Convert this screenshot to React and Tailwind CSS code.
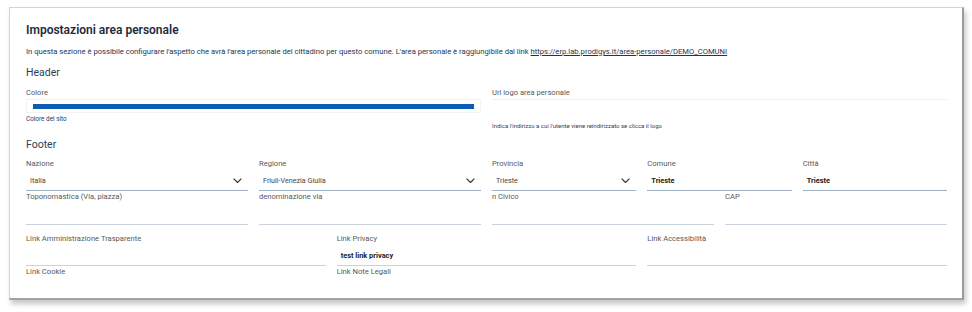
import React from 'react';

const Chevron = () => (
  <svg width="9" height="6" viewBox="0 0 9 6" fill="none">
    <path d="M1 1l3.5 3.5L8 1" stroke="#3a3a3a" strokeWidth="1.1" strokeLinecap="round" strokeLinejoin="round" />
  </svg>
);

const Label = ({ children }) => (
  <div className="h-[12px] text-[7.6px] leading-[12px] text-[#585858] whitespace-nowrap">{children}</div>
);

const SelectField = ({ label, value, span }) => (
  <div className={span}>
    <Label>{label}</Label>
    <div className="h-[21px] border-b border-[#9eb0c4] flex items-center justify-between pt-[2px] pl-[4px] pr-[6px] text-[7.2px] text-[#474747]">
      <span>{value}</span>
      <Chevron />
    </div>
  </div>
);

const InputField = ({ label, value, span, h = 'h-[21px]', line = 'border-[#c9d2dc]' }) => (
  <div className={span}>
    <Label>{label}</Label>
    <div className={`${h} border-b ${line} flex items-center pt-[2px] pl-[4px] text-[7.4px] font-bold text-[#222]`}>
      {value}
    </div>
  </div>
);

export default function App() {
  return (
    <div className="w-[972px] h-[312px] bg-white pt-[7px] pl-[9px] font-[Roboto,sans-serif]">
      <div className="w-[955px] h-[293px] overflow-hidden bg-white border border-[#d4d4d4] border-r-2 border-r-[#9c9c9c] border-b-2 border-b-[#a3a3a3] shadow-[2px_4px_5px_rgba(0,0,0,0.22)] pt-[14px] pl-[16px] pr-[15px]">
        <h1 className="text-[12px] leading-[16px] font-semibold text-[#1c2b3b]">Impostazioni area personale</h1>
        <p className="mt-[8px] text-[7.65px] leading-[12px] text-[#1f3650] whitespace-nowrap">
          In questa sezione è possibile configurare l'aspetto che avrà l'area personale del cittadino per questo comune. L'area personale è raggiungibile dal link{' '}
          <span className="underline">https://erp.lab.prodigys.it/area-personale/DEMO_COMUNI</span>
        </p>

        {/* Header */}
        <h2 className="mt-[8px] text-[10.5px] leading-[14px] text-[#2a3f57]">Header</h2>
        <div className="mt-[7px] grid grid-cols-2 gap-[11px]">
          <div>
            <Label>Colore</Label>
            <div className="h-[14px] border border-[#f1f3f5] px-[6px] pt-[4px]">
              <div className="h-[5px] bg-[#0a5db3]" />
            </div>
            <div className="mt-[1px] text-[6.4px] leading-[10px] text-[#2a4260]">Colore del sito</div>
          </div>
          <div>
            <Label>Url logo area personale</Label>
            <div className="h-[22px] border-t border-[#eceff2]" />
            <div className="text-[6px] leading-[10px] text-[#2a4260] whitespace-nowrap">
              Indica l'indirizzo a cui l'utente viene reindirizzato se clicca il logo
            </div>
          </div>
        </div>

        {/* Footer */}
        <h2 className="mt-[7px] text-[10.5px] leading-[14px] text-[#2a3f57]">Footer</h2>
        <div className="mt-[6px] grid grid-cols-12 gap-x-[11px]">
          <SelectField span="col-span-3" label="Nazione" value="Italia" />
          <SelectField span="col-span-3" label="Regione" value="Friuli-Venezia Giulia" />
          <SelectField span="col-span-2" label="Provincia" value="Trieste" />
          <InputField span="col-span-2" label="Comune" value="Trieste" line="border-[#9eb0c4]" />
          <InputField span="col-span-2" label="Città" value="Trieste" line="border-[#9eb0c4]" />

          <InputField span="col-span-3" label="Toponomastica (Via, piazza)" h="h-[22px]" />
          <InputField span="col-span-3" label="denominazione via" h="h-[22px]" />
          <InputField span="col-span-3" label="n Civico" h="h-[22px]" />
          <InputField span="col-span-3" label="CAP" h="h-[22px]" />
        </div>

        <div className="mt-[8px] grid grid-cols-3 gap-x-[11px]">
          <InputField label="Link Amministrazione Trasparente" />
          <InputField label="Link Privacy" value="test link privacy" />
          <InputField label="Link Accessibilità" />
          <InputField label="Link Cookie" h="h-[30px]" />
          <InputField label="Link Note Legali" h="h-[30px]" />
        </div>
      </div>
    </div>
  );
}
